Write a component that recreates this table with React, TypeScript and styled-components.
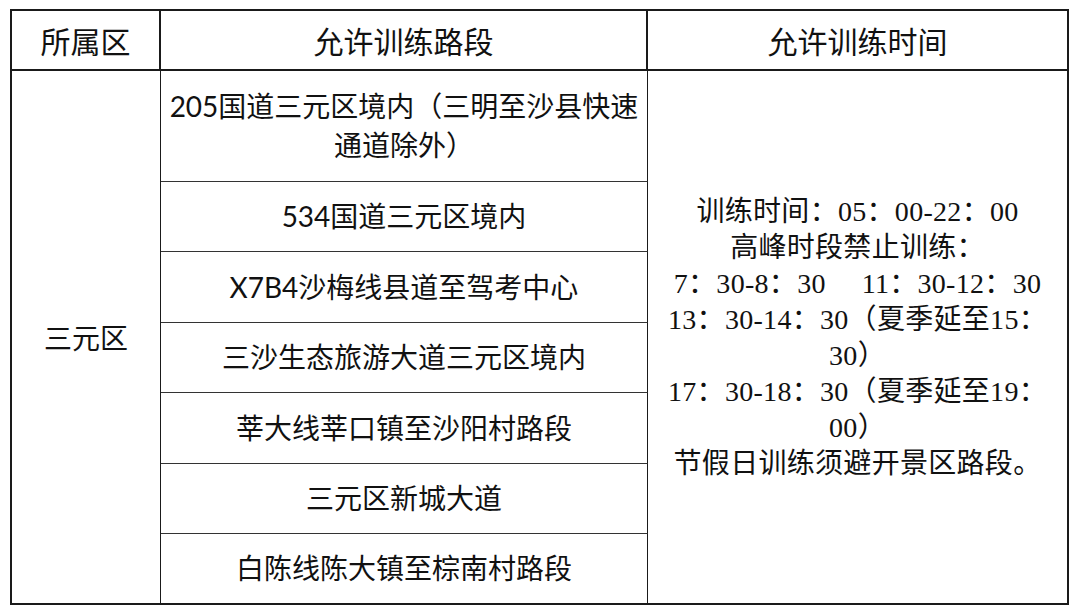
import React from 'react';
import styled, { createGlobalStyle } from 'styled-components';

const GlobalStyle = createGlobalStyle`
  html, body {
    margin: 0;
    padding: 0;
    background: #ffffff;
  }
  body {
    font-family: "Noto Sans CJK SC", sans-serif;
    color: #111111;
  }
`;

const Page = styled.div({
  width: 1080,
  height: 615,
  padding: '9px 0 0 10px',
  boxSizing: 'border-box',
  background: '#ffffff',
});

const Table = styled.div({
  width: 1059,
  display: 'grid',
  gridTemplateColumns: '149px 487px 1fr',
  gridTemplateRows: '60px 111px 70px 71px 70px 71px 70px 69px',
  border: '2px solid #1a1a1a',
  boxSizing: 'border-box',
});

const Cell = styled.div<{ $last?: boolean; $head?: boolean; $bottom?: boolean }>`
  display: flex;
  align-items: center;
  justify-content: center;
  text-align: center;
  box-sizing: border-box;
  border-right: ${(p) => (p.$last ? 'none' : p.$head ? '2px solid #1a1a1a' : '1px solid #1a1a1a')};
  border-bottom: ${(p) => (p.$head ? '2px solid #1a1a1a' : p.$bottom ? 'none' : '1px solid #333333')};
`;

const HeadCell = styled(Cell)({
  fontSize: 30,
  fontFamily: '"Noto Sans CJK SC", sans-serif',
  color: '#111',
});

const DistrictCell = styled(Cell)({
  gridRow: '2 / 9',
  gridColumn: 1,
  fontSize: 28,
  borderBottom: 'none',
});

const RoadCell = styled(Cell)({
  gridColumn: 2,
  fontSize: 28,
  lineHeight: '39px',
  fontFamily: 'Lato, "Noto Sans CJK SC", sans-serif',
  fontWeight: 400,
});

const TimeCell = styled(Cell)({
  gridRow: '2 / 9',
  gridColumn: 3,
  flexDirection: 'column',
  fontSize: 28,
  lineHeight: '36px',
  fontFamily: '"Liberation Serif", "Noto Sans CJK SC", serif',
  borderBottom: 'none',
  paddingTop: 2,
});

const TimeLine = styled.div({
  whiteSpace: 'pre',
  letterSpacing: 0.3,
});

const roads: React.ReactNode[] = [
  <>205国道三元区境内（三明至沙县快速<br />通道除外）</>,
  '534国道三元区境内',
  'X7B4沙梅线县道至驾考中心',
  '三沙生态旅游大道三元区境内',
  '莘大线莘口镇至沙阳村路段',
  '三元区新城大道',
  '白陈线陈大镇至棕南村路段',
];

const timeLines = [
  '训练时间：05：00-22：00',
  '高峰时段禁止训练：',
  '7：30-8：30\u2002\u2002 11：30-12：30',
  '13：30-14：30（夏季延至15：',
  '30）',
  '17：30-18：30（夏季延至19：',
  '00）',
  '节假日训练须避开景区路段。',
];

const App: React.FC = () => (
  <Page>
    <GlobalStyle />
    <Table>
      <HeadCell $head>所属区</HeadCell>
      <HeadCell $head>允许训练路段</HeadCell>
      <HeadCell $head $last>允许训练时间</HeadCell>
      <DistrictCell>三元区</DistrictCell>
      {roads.map((road, i) => (
        <RoadCell key={i} $bottom={i === roads.length - 1}>
          <div>{road}</div>
        </RoadCell>
      ))}
      <TimeCell $last>
        {timeLines.map((line) => (
          <TimeLine key={line}>{line}</TimeLine>
        ))}
      </TimeCell>
    </Table>
  </Page>
);

export default App;
